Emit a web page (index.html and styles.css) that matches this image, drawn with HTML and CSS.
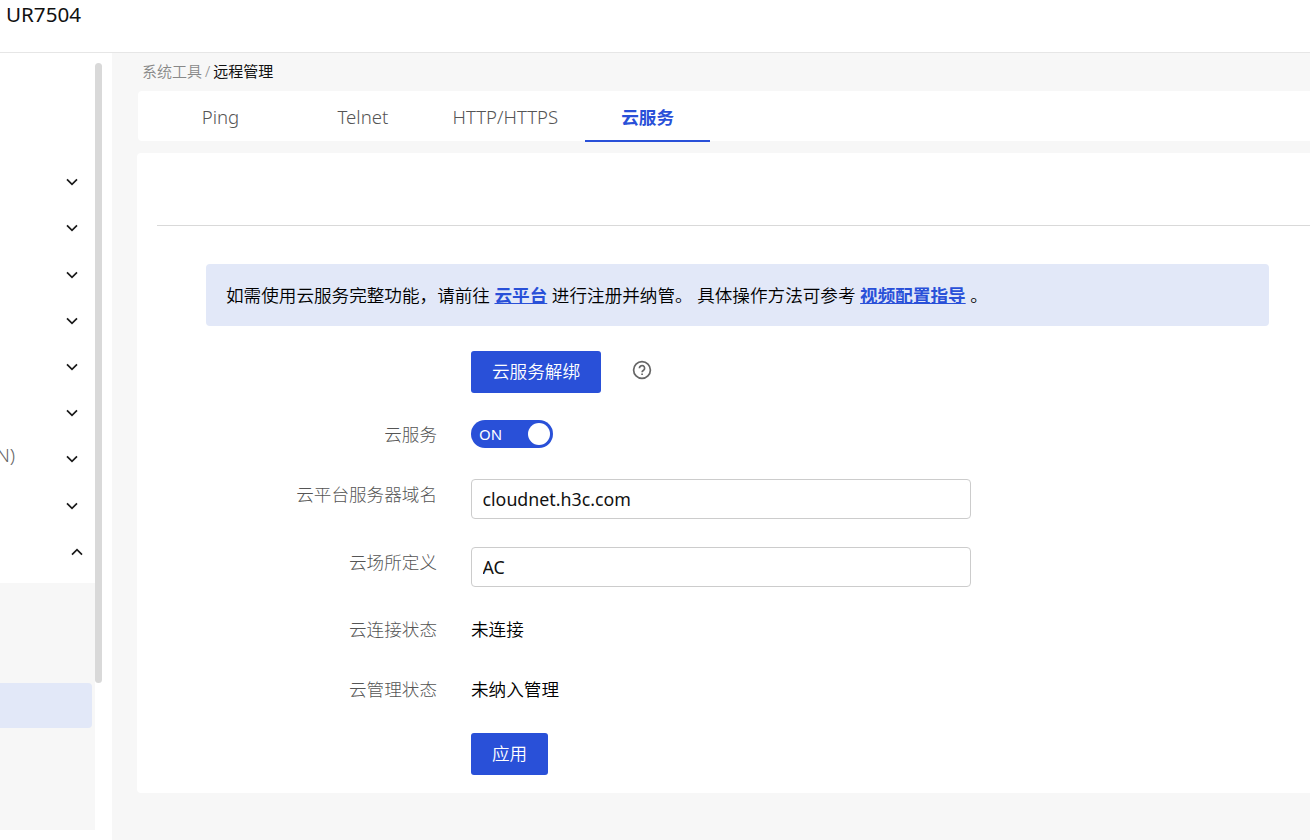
FILE: index.html
```html
<!DOCTYPE html>
<html lang="zh-CN">

<head>
    <meta charset="UTF-8">
    <meta name="viewport" content="width=device-width, initial-scale=1.0">
    <title>UR7504</title>
    <link rel="stylesheet" href="styles.css">
</head>

<body>
    <header class="header">UR7504</header>

    <div class="layout">
        <aside class="sidebar">
            <nav class="menu">
                <div class="menu-item"><svg class="arrow" viewBox="0 0 12 8"><path d="M1 1.3l5 5 5-5"/></svg></div>
                <div class="menu-item"><svg class="arrow" viewBox="0 0 12 8"><path d="M1 1.3l5 5 5-5"/></svg></div>
                <div class="menu-item"><svg class="arrow" viewBox="0 0 12 8"><path d="M1 1.3l5 5 5-5"/></svg></div>
                <div class="menu-item"><svg class="arrow" viewBox="0 0 12 8"><path d="M1 1.3l5 5 5-5"/></svg></div>
                <div class="menu-item"><svg class="arrow" viewBox="0 0 12 8"><path d="M1 1.3l5 5 5-5"/></svg></div>
                <div class="menu-item"><svg class="arrow" viewBox="0 0 12 8"><path d="M1 1.3l5 5 5-5"/></svg></div>
                <div class="menu-item"><span class="menu-text">N)</span><svg class="arrow" viewBox="0 0 12 8"><path d="M1 1.3l5 5 5-5"/></svg></div>
                <div class="menu-item"><svg class="arrow" viewBox="0 0 12 8"><path d="M1 1.3l5 5 5-5"/></svg></div>
                <div class="menu-item open"><svg class="arrow" viewBox="0 0 12 8"><path d="M1 6.7l5-5 5 5"/></svg></div>
                <div class="submenu">
                    <div class="submenu-item active"></div>
                </div>
            </nav>
            <div class="scrollbar"></div>
        </aside>

        <main class="main">
            <div class="breadcrumb">系统工具<span class="slash">/</span><span class="current">远程管理</span></div>

            <div class="tabs">
                <div class="tab">Ping</div>
                <div class="tab">Telnet</div>
                <div class="tab">HTTP/HTTPS</div>
                <div class="tab active">云服务</div>
            </div>

            <section class="panel">
                <div class="panel-head"></div>

                <div class="notice">如需使用云服务完整功能，请前往 <a class="link" href="#">云平台</a> 进行注册并纳管。 具体操作方法可参考 <a class="link" href="#">视频配置指导</a> 。</div>

                <div class="form">
                    <div class="row row-unbind">
                        <button class="btn">云服务解绑</button>
                        <svg class="help" viewBox="0 0 20 20">
                            <circle cx="10" cy="10" r="8.4"/>
                            <path d="M7.4 8.2a2.6 2.6 0 1 1 4.1 2.1c-.9.6-1.4 1-1.4 2"/>
                            <path d="M10.1 13.6v1.5"/>
                        </svg>
                    </div>
                    <div class="row row-switch">
                        <label class="label">云服务</label>
                        <div class="switch"><span class="switch-text">ON</span><span class="knob"></span></div>
                    </div>
                    <div class="row row-domain">
                        <label class="label">云平台服务器域名</label>
                        <input class="input" type="text" value="cloudnet.h3c.com">
                    </div>
                    <div class="row row-place">
                        <label class="label">云场所定义</label>
                        <input class="input" type="text" value="AC">
                    </div>
                    <div class="row row-connect">
                        <label class="label">云连接状态</label>
                        <span class="value">未连接</span>
                    </div>
                    <div class="row row-manage">
                        <label class="label">云管理状态</label>
                        <span class="value">未纳入管理</span>
                    </div>
                    <div class="row row-apply">
                        <button class="btn">应用</button>
                    </div>
                </div>
            </section>
        </main>
    </div>
</body>

</html>
```
FILE: styles.css
```css
* {
    box-sizing: border-box;
}

body {
    margin: 0;
    height: 840px;
    overflow: hidden;
    background-color: #fff;
    color: #000;
    font-family: "Noto Sans", "Noto Sans CJK SC", sans-serif;
    font-size: 17.6px;
    font-weight: 350;
}

.header {
    height: 53px;
    padding-left: 6px;
    border-bottom: 1px solid #e6e6e6;
    color: #111;
    font-size: 20.6px;
    font-weight: 400;
    line-height: 29px;
}

.layout {
    display: flex;
    height: 787px;
}

.sidebar {
    display: flex;
    width: 112px;
    flex-shrink: 0;
}

.menu {
    width: 95px;
    padding-top: 106px;
}

.menu-item {
    display: flex;
    align-items: center;
    justify-content: flex-end;
    height: 46.22px;
    padding-right: 17px;
}

.menu-item.open {
    height: 54px;
    padding-right: 12px;
    padding-bottom: 8px;
}

.menu-text {
    margin-right: auto;
    margin-left: -4px;
    padding-bottom: 8px;
    color: #666;
    font-size: 19px;
    line-height: 26px;
}

.arrow {
    width: 12px;
    height: 8px;
    fill: none;
    stroke: #1a1a1a;
    stroke-width: 1.7;
}

.submenu {
    height: 247px;
    padding-top: 100px;
    background-color: #f7f7f7;
}

.submenu-item {
    width: 92px;
    height: 45px;
}

.submenu-item.active {
    background-color: #e2e8f8;
    border-radius: 0 4px 4px 0;
}

.scrollbar {
    width: 7px;
    height: 620px;
    margin-top: 10px;
    border-radius: 4px;
    background-color: #d9d9d9;
}

.main {
    flex: 1;
    min-width: 0;
    padding-left: 25px;
    background-color: #f7f7f7;
}

.breadcrumb {
    height: 38px;
    padding-left: 5px;
    color: #888;
    font-size: 15px;
    line-height: 37px;
}

.slash {
    margin: 0 3px;
}

.current {
    color: #111;
    font-weight: 400;
}

.tabs {
    display: flex;
    gap: 17.4px;
    height: 50px;
    margin-left: 1px;
    padding-left: 20px;
    background-color: #fff;
    border-radius: 4px 0 0 4px;
}

.tab {
    width: 125px;
    height: 51px;
    color: #555;
    font-size: 18.6px;
    font-weight: 300;
    line-height: 52px;
    text-align: center;
}

.tab.active {
    border-bottom: 2px solid #2950d8;
    color: #2950d8;
    font-size: 17.6px;
    font-weight: 700;
}

.panel {
    height: 640px;
    margin-top: 12px;
    padding-left: 20px;
    background-color: #fff;
    border-radius: 4px 0 0 4px;
}

.panel-head {
    height: 73px;
    border-bottom: 1px solid #d9d9d9;
}

.notice {
    width: 1063px;
    height: 62px;
    margin: 38px 0 0 49px;
    padding-left: 20px;
    background-color: #e2e8f8;
    border-radius: 4px;
    line-height: 62px;
    white-space: nowrap;
}

.link {
    color: #2950d8;
    font-weight: 700;
}

.form {
    padding: 25px 0 0 49px;
}

.row {
    display: flex;
    align-items: center;
}

.row-unbind,
.row-apply {
    padding-left: 265px;
}

.row-switch {
    margin-top: 27px;
}

.row-domain {
    margin-top: 31px;
}

.row-place {
    margin-top: 28px;
}

.row-connect {
    margin-top: 29px;
}

.row-manage {
    margin-top: 34px;
}

.row-apply {
    margin-top: 31px;
}

.label {
    width: 231px;
    margin-right: 34px;
    color: #555;
    font-weight: 300;
    line-height: 26px;
    text-align: right;
}

.row-domain .label,
.row-place .label {
    margin-bottom: 11px;
}

.value {
    line-height: 26px;
}

.btn {
    height: 42px;
    padding: 0 21px 4px;
    border: none;
    border-radius: 3px;
    background-color: #2950d8;
    color: #fff;
    font: inherit;
}

.help {
    width: 20px;
    height: 20px;
    margin: -4px 0 0 31px;
    fill: none;
    stroke: #666;
    stroke-width: 1.7;
}

.switch {
    display: flex;
    align-items: center;
    justify-content: space-between;
    width: 82px;
    height: 28px;
    padding: 0 3px 0 8px;
    border-radius: 14px;
    background-color: #2950d8;
    color: #fff;
    font-size: 15px;
    font-weight: 400;
}

.knob {
    width: 22px;
    height: 22px;
    border-radius: 50%;
    background-color: #fff;
}

.input {
    width: 500px;
    height: 40px;
    padding: 0 10.5px;
    border: 1px solid #ccc;
    border-radius: 4px;
    background-color: #fff;
    color: #111;
    font: inherit;
    font-size: 17.8px;
    font-weight: 400;
}
```
